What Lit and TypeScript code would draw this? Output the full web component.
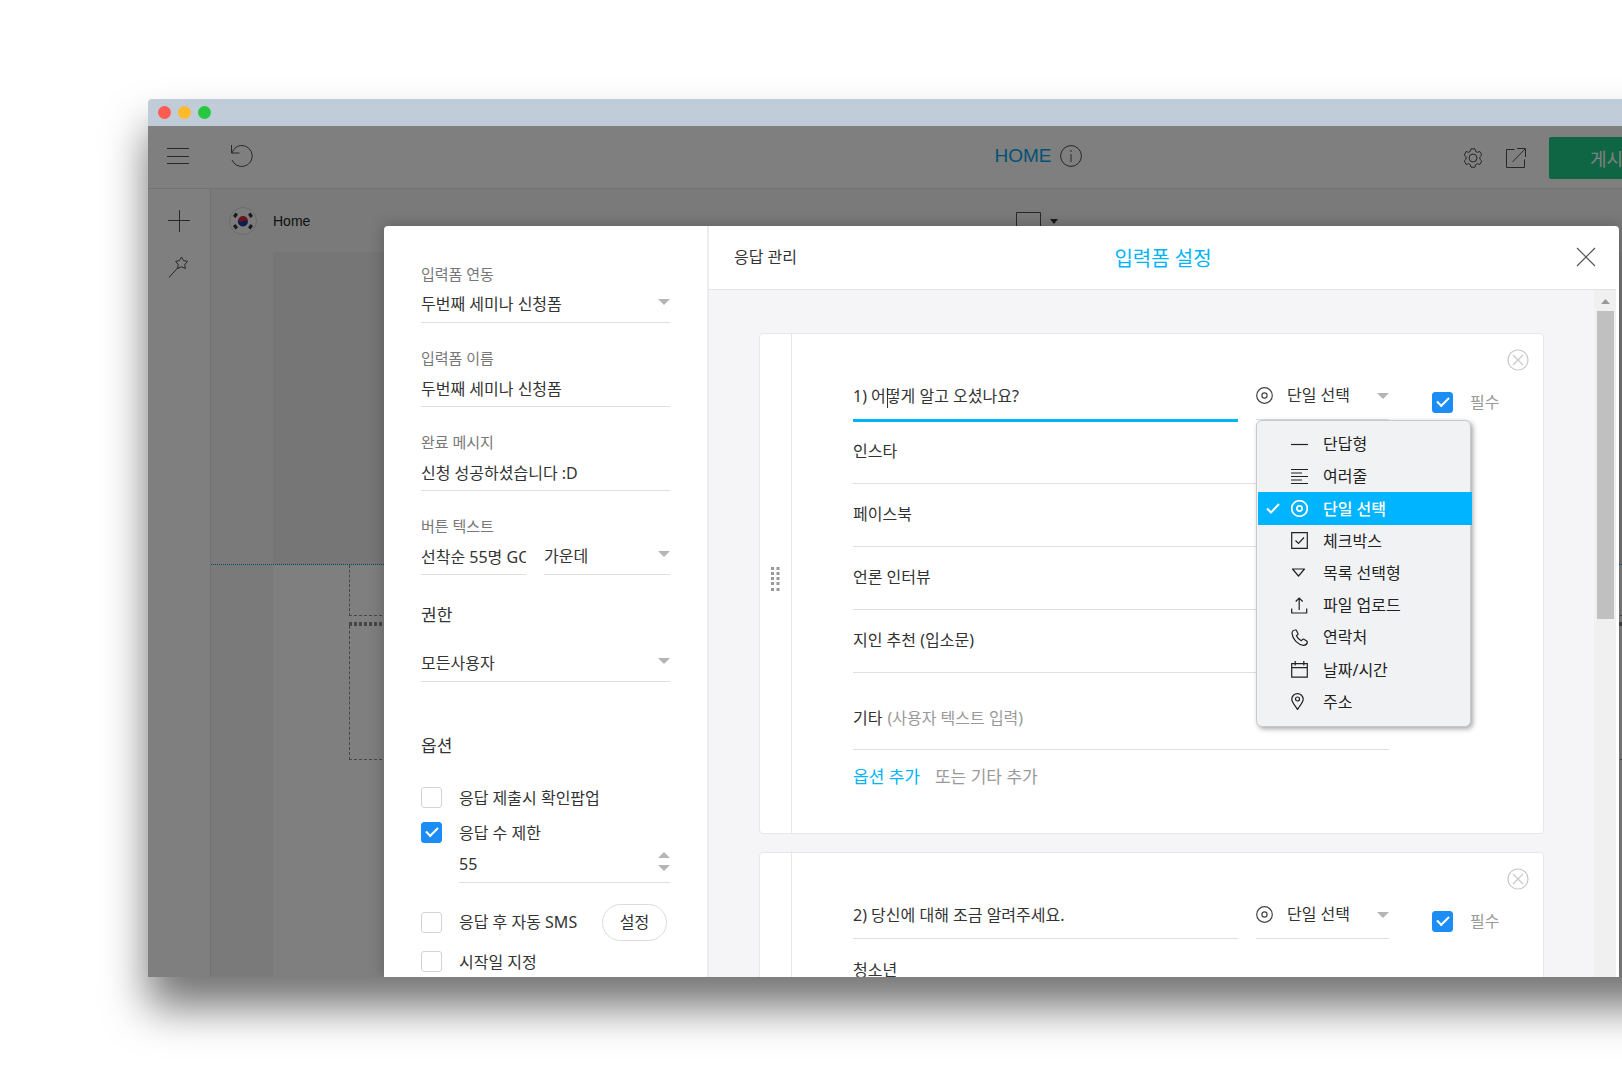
import { LitElement, html, css, svg, nothing } from "lit";
import { customElement, property, state } from "lit/decorators.js";
import { classMap } from "lit/directives/class-map.js";

const shared = css`
  *, *::before, *::after { box-sizing: border-box; }
  button, input, select {
    font: inherit;
    color: inherit;
    background: none;
    border: 0;
    border-radius: 0;
    margin: 0;
    padding: 0;
    outline: none;
  }
  button { cursor: pointer; }
  svg { display: block; fill: none; stroke: currentColor; flex: none; }
  .control {
    width: 100%;
    min-width: 0;
    height: 38px;
    border-bottom: 1px solid #dedfe1;
    appearance: none;
  }
  .picker { display: grid; align-items: center; min-width: 0; }
  .picker > * { grid-area: 1 / 1; }
  .caret { justify-self: end; pointer-events: none; color: #b5b5b5; fill: currentColor; stroke: none; }
  .check {
    appearance: none;
    display: grid;
    flex: none;
    width: 21px;
    height: 21px;
    border: 1px solid #cfd5da;
    border-radius: 3px;
    background: #fff;
  }
  .check:checked { background: #1c8df5; border-color: #1c8df5; }
  .check:checked::before {
    content: "";
    width: 12px;
    height: 7px;
    margin: 4px 0 0 4px;
    border: solid #fff;
    border-width: 0 0 2px 2px;
    transform: rotate(-45deg);
  }
`;

const caret = html`<svg class="caret" width="12" height="6" viewBox="0 0 12 6" aria-hidden="true"><path d="M0 0h12L6 6z" /></svg>`;

const icons: Record<string, unknown> = {
  short: svg`<path d="M0 8.500h17" />`,
  lines: svg`<path d="M0 1.500h17M0 5h11M0 8.500h17M0 12h11M0 15.500h17" />`,
  radio: svg`<circle cx="8.500" cy="8.500" r="7.800" /><circle cx="8.500" cy="8.500" r="2.600" />`,
  checkbox: svg`<path d="M.7.7h15.600v15.600H.7zM4.500 8.500l3 3 5.500-6" />`,
  dropdown: svg`<path d="M1.500 5h12L7.500 12z" stroke-linejoin="round" />`,
  upload: svg`<path d="M.7 11.500v4.500h15v-4.500M8.200 13V1M4.700 4.500L8.200 1l3.500 3.500" />`,
  phone: svg`<path d="M4.200 1C2.500 1.200 1 2.600 1 4.400c.6 6 5.800 11.200 11.500 11.900 2 0 3.400-1.200 3.800-2.800.1-.7-.1-1.100-.6-1.500l-2.800-1.700c-.6-.3-1.200-.2-1.600.3l-1 1.100c-2-.9-4-2.900-4.900-4.900l1.100-1c.5-.4.6-1 .3-1.600L5.500 1.500C5.200 1.100 4.800.9 4.200 1z" />`,
  date: svg`<path d="M.7 2.700h15.600v13.500H.7zM.7 6.700h15.600M4.200 0v4.500M12.800 0v4.500" />`,
  place: svg`<path d="M6.500 16.500C4.500 12.500.8 9.700.8 6.300a5.700 5.700 0 0 1 11.400 0c0 3.400-3.700 6.200-5.700 10.200z" /><circle cx="6.500" cy="6" r="2" />`,
};

const icon = (name: string, width = 1.2) =>
  html`<svg width="17" height="17" viewBox="0 0 17 17" stroke-width=${width} aria-hidden="true">${icons[name]}</svg>`;

const answerTypes = [
  ["short", "단답형"],
  ["lines", "여러줄"],
  ["radio", "단일 선택"],
  ["checkbox", "체크박스"],
  ["dropdown", "목록 선택형"],
  ["upload", "파일 업로드"],
  ["phone", "연락처"],
  ["date", "날짜/시간"],
  ["place", "주소"],
];

@customElement("question-card")
class QuestionCard extends LitElement {
  @property() question = "";
  @property({ attribute: false }) options: string[] = [];
  @property({ type: Boolean }) active = false;
  @state() private answerType = "radio";

  static styles = [
    shared,
    css`
      :host { display: block; }
      .card {
        display: grid;
        grid-template-columns: 32px minmax(0, 1fr);
        background: #fff;
        border: 1px solid #e6e7e9;
        border-radius: 4px;
      }
      .grip {
        display: grid;
        place-items: center;
        border-right: 1px solid #e6e7e9;
        padding-bottom: 9px;
        cursor: grab;
      }
      .grip svg { fill: #999; stroke: none; }
      .content { padding: 15px 14px 43px 61px; }
      .head { display: flex; justify-content: flex-end; height: 22px; color: #c9c9c9; }
      .ask {
        display: grid;
        grid-template-columns: minmax(0, 1fr) 133px 140px;
        align-items: start;
        height: 50px;
      }
      .title { position: relative; margin-right: 18px; }
      .title .control { height: 49px; }
      .title .focused { height: 51px; border-bottom: 3px solid #00b4fa; }
      .cursor { position: absolute; left: 34px; top: 17px; width: 1px; height: 20px; background: #333; }
      .type { position: relative; }
      .type .control { height: 49px; padding-left: 31px; }
      .type > .mark { pointer-events: none; color: #444; }
      .required {
        display: flex;
        align-items: center;
        gap: 17px;
        padding: 19px 0 0 43px;
        color: #999;
      }
      .options { padding-right: 140px; }
      .options .control { display: block; height: 63px; padding-bottom: 5px; }
      .etc {
        display: flex;
        align-items: center;
        gap: 5px;
        height: 77px;
        padding-top: 13px;
        border-bottom: 1px solid #dedfe1;
      }
      .etc input { flex: 1; min-width: 0; }
      .etc input::placeholder { color: #999; opacity: 1; }
      .add { display: flex; gap: 15px; margin-top: 14px; font-size: 17px; line-height: 26px; color: #999; }
      .add .primary { color: #00b4fa; }
      .menu {
        position: absolute;
        z-index: 2;
        top: 49px;
        left: 0;
        width: 215px;
        height: 307px;
        display: grid;
        grid-auto-rows: 1fr;
        padding: 7px 0 8px;
        background: #f1f2f4;
        border: 1px solid #c8c9cb;
        border-radius: 6px;
        box-shadow: 2px 2px 5px rgba(0, 0, 0, 0.35);
        color: #222;
      }
      .item {
        display: grid;
        grid-template-columns: 34px 32px 1fr;
        align-items: center;
        text-align: left;
      }
      .tick { margin-left: 8px; }
      .item.selected {
        margin: 0 -2px 0 1px;
        grid-template-columns: 33px 32px 1fr;
        background: #00b4ff;
        color: #fff;
        font-weight: 500;
      }
    `,
  ];

  private renderMenu() {
    return html`<div class="menu" role="listbox" aria-label="응답 유형">
      ${answerTypes.map(([name, label]) => {
        const selected = name === this.answerType;
        return html`<button
          class=${classMap({ item: true, selected })}
          role="option"
          aria-selected=${selected}
          @click=${() => (this.answerType = name)}
        >
          ${selected
            ? html`<svg class="tick" width="14" height="11" viewBox="0 0 14 11" stroke-width="2" aria-hidden="true"><path d="M1 5.500l4 4L13 1" /></svg>`
            : html`<span></span>`}
          ${icon(name, selected ? 1.7 : 1.2)}
          <span>${label}</span>
        </button>`;
      })}
    </div>`;
  }

  render() {
    return html`<article class="card">
      <div class="grip">
        <svg width="9" height="24" viewBox="0 0 9 24" aria-hidden="true">
          ${[0, 5, 10, 15, 21].map((y) => svg`<path d="M0 ${y}h3v3h-3zM5.500 ${y}h3v3h-3z" />`)}
        </svg>
      </div>
      <div class="content">
        <div class="head">
          <button aria-label="질문 삭제">
            <svg width="22" height="22" viewBox="0 0 22 22" stroke-width="1.200"><circle cx="11" cy="11" r="10" /><path d="M6 6l10 10M16 6L6 16" /></svg>
          </button>
        </div>
        <div class="ask">
          <div class="title">
            <input class=${classMap({ control: true, focused: this.active })} aria-label="질문" .value=${this.question} />
            ${this.active ? html`<span class="cursor"></span>` : nothing}
          </div>
          <div class="type picker">
            <select class="control" aria-label="응답 유형">
              <option>단일 선택</option>
            </select>
            <span class="mark">${icon("radio")}</span>
            ${caret}
            ${this.active ? this.renderMenu() : nothing}
          </div>
          <label class="required"><input class="check" type="checkbox" checked />필수</label>
        </div>
        <div class="options">
          ${this.options.map((o, i) => html`<input class="control" aria-label="옵션 ${i + 1}" .value=${o} />`)}
          <label class="etc">기타<input placeholder="(사용자 텍스트 입력)" /></label>
        </div>
        <div class="add"><button class="primary">옵션 추가</button><button>또는 기타 추가</button></div>
      </div>
    </article>`;
  }
}

@customElement("form-settings")
class FormSettings extends LitElement {
  static styles = [
    shared,
    css`
      :host { display: block; min-width: 0; overflow: hidden; }
      .panel { padding: 37px 37px 0; }
      .fields { display: grid; gap: 24px; }
      .field { display: grid; grid-template-rows: 22px 38px; }
      .picker > .caret { margin-bottom: 4px; }
      .caption { font-size: 15px; line-height: 22px; color: #777; }
      .pair { display: grid; grid-template-columns: 105px minmax(0, 1fr); gap: 18px; }
      .heading { font-size: 17px; font-weight: 400; line-height: 24px; margin: 28px 0 17px; }
      .heading.options { margin: 52px 0 22px; }
      .row { display: flex; align-items: center; height: 35px; }
      .row label { display: flex; align-items: center; gap: 17px; }
      .limit { margin-left: 38px; }
      .limit .control { height: 33px; padding-bottom: 5px; }
      .stepper { justify-self: end; display: grid; gap: 7px; padding-bottom: 10px; }
      .up { transform: rotate(180deg); }
      .sms { justify-content: space-between; height: 38px; margin: 20px 3px 3px 0; }
      .setup { width: 65px; height: 37px; border: 1px solid #dcdcdc; border-radius: 19px; }
    `,
  ];

  render() {
    return html`<div class="panel">
      <div class="fields">
        <div class="field">
          <label class="caption" for="link">입력폼 연동</label>
          <div class="picker"><select class="control" id="link"><option>두번째 세미나 신청폼</option></select>${caret}</div>
        </div>
        <div class="field">
          <label class="caption" for="name">입력폼 이름</label>
          <input class="control" id="name" value="두번째 세미나 신청폼" />
        </div>
        <div class="field">
          <label class="caption" for="message">완료 메시지</label>
          <input class="control" id="message" value="신청 성공하셨습니다 :D" />
        </div>
        <div class="field">
          <label class="caption" for="text">버튼 텍스트</label>
          <div class="pair">
            <input class="control" id="text" value="선착순 55명 GO" />
            <div class="picker"><select class="control" aria-label="버튼 정렬"><option>가운데</option></select>${caret}</div>
          </div>
        </div>
      </div>
      <h3 class="heading">권한</h3>
      <div class="picker"><select class="control" aria-label="권한"><option>모든사용자</option></select>${caret}</div>
      <h3 class="heading options">옵션</h3>
      <div class="row"><label><input class="check" type="checkbox" />응답 제출시 확인팝업</label></div>
      <div class="row"><label><input class="check" type="checkbox" checked />응답 수 제한</label></div>
      <div class="limit picker">
        <input class="control" inputmode="numeric" aria-label="응답 수" value="55" />
        <div class="stepper">
          <button aria-label="증가"><svg class="caret up" width="12" height="6" viewBox="0 0 12 6"><path d="M0 0h12L6 6z" /></svg></button>
          <button aria-label="감소">${caret}</button>
        </div>
      </div>
      <div class="row sms">
        <label><input class="check" type="checkbox" />응답 후 자동 SMS</label>
        <button class="setup">설정</button>
      </div>
      <div class="row"><label><input class="check" type="checkbox" />시작일 지정</label></div>
    </div>`;
  }
}

@customElement("site-editor")
class SiteEditor extends LitElement {
  static styles = [
    shared,
    css`
      :host {
        display: grid;
        grid-template-rows: 63px minmax(0, 1fr);
        min-height: 0;
        background: #fff;
        color: #222;
        font-family: "Liberation Sans", Arial, "Noto Sans CJK KR", sans-serif;
      }
      .bar {
        display: grid;
        grid-template-columns: 1fr auto 1fr;
        align-items: center;
        padding-bottom: 3px;
        border-bottom: 1px solid #e4e4e4;
      }
      .tools { display: flex; align-items: center; gap: 41px; padding: 1px 0 0 19px; color: #505050; }
      .page { display: flex; align-items: center; gap: 8px; padding-top: 1px; font-size: 19px; color: #00a4e8; }
      .page svg { color: #505050; }
      .actions {
        display: flex;
        align-items: center;
        justify-content: flex-end;
        gap: 23px;
        padding: 5px 231px 0 0;
        color: #505050;
      }
      .publish {
        width: 148px;
        height: 42px;
        border-radius: 2px;
        background: #1ecd8a;
        color: #fff;
        font: 18px "Noto Sans CJK KR", sans-serif;
      }
      .main { display: grid; grid-template-columns: 63px minmax(0, 1fr); min-height: 0; }
      .side {
        display: flex;
        flex-direction: column;
        align-items: center;
        gap: 24px;
        padding: 21px 1px 0 0;
        border-right: 1px solid #e2e2e2;
        color: #505050;
      }
      .work { display: grid; grid-template-rows: 63px 313px minmax(0, 1fr); background: #f5f5f5; }
      .crumbs { display: grid; grid-template-columns: 1fr auto 1fr; align-items: center; font-size: 14px; }
      .lang { display: flex; align-items: center; gap: 16px; padding-left: 18px; }
      .flag { stroke: none; }
      .device { display: flex; align-items: center; gap: 9px; margin-right: 66px; padding-top: 2px; color: #505050; }
      .section { padding-left: 62px; border-bottom: 1px dotted #008fd0; }
      .hero { height: 100%; background: #ececec; }
      .blank { padding-left: 62px; }
      .sheet { height: 100%; padding-left: 76px; background: #fff; }
      .block { height: 51px; border: 1px dashed #8c8c8c; border-width: 0 0 1px 1px; }
      .block.tall { height: 134px; }
      .space { height: 6px; }
      .seam { height: 4px; background: repeating-linear-gradient(90deg, #8c8c8c 0 3px, transparent 3px 5px); }
    `,
  ];

  render() {
    return html`
      <header class="bar">
        <div class="tools">
          <button aria-label="메뉴"><svg width="22" height="22" viewBox="0 0 22 22"><path d="M0 3.500h22M0 11.500h22M0 18.500h22" /></svg></button>
          <button aria-label="실행 취소"><svg width="24" height="24" viewBox="0 0 24 24"><path d="M1.500 1v8h8M2 9C4 3.500 8 1.500 12 1.500a10.500 10.500 0 1 1-10 14.500" /></svg></button>
        </div>
        <div class="page">
          <span>HOME</span>
          <svg width="22" height="22" viewBox="0 0 22 22"><circle cx="11" cy="11" r="10.400" /><path d="M11 9v8M11 5v2" /></svg>
        </div>
        <div class="actions">
          <button aria-label="설정">
            <svg width="20" height="20" viewBox="0 0 20 20"><circle cx="10" cy="10" r="4" /><path d="M8 .8h4l.6 2.500 1.700 1 2.500-.8 2 3.500-1.900 1.800v2.400l1.900 1.800-2 3.500-2.500-.8-1.700 1-.6 2.500H8l-.6-2.500-1.700-1-2.500.8-2-3.500 1.900-1.800V8.800L1.200 7l2-3.500 2.500.8 1.700-1z" stroke-linejoin="round" /></svg>
          </button>
          <button aria-label="미리보기"><svg width="20" height="20" viewBox="0 0 20 20"><path d="M8.500 1.500H.500v18h18V11.500M11 .5h8.500v8.500M19 1L6.500 14" /></svg></button>
          <button class="publish">게시하기</button>
        </div>
      </header>
      <div class="main">
        <nav class="side">
          <button aria-label="추가"><svg width="22" height="22" viewBox="0 0 22 22"><path d="M0 10.500h22M11.500 0v22" /></svg></button>
          <button aria-label="디자인"><svg width="21" height="22" viewBox="0 0 21 22" stroke-linejoin="round"><path d="M1 21.500L10 11.500M13.500 1l2 3.600 4.100.8-2.800 3 .5 4.100-3.800-1.700-3.800 1.700.5-4.100-2.700-3 4-.8z" /></svg></button>
        </nav>
        <div class="work">
          <div class="crumbs">
            <div class="lang">
              <svg class="flag" width="28" height="28" viewBox="0 0 28 28" aria-hidden="true">
                <circle cx="14" cy="14" r="13.500" fill="#f8f8f8" stroke="#d6d6d6" />
                <circle cx="14" cy="14" r="5" fill="#d8262e" />
                <path d="M9.300 12.500A5 5 0 1 0 18.800 15.500C18.500 13.200 15.500 12.700 14 14C12.500 15.500 9.500 15 9.300 12.500z" fill="#173f9e" />
                <g fill="#333">
                  <path d="M4 9l2.500-3.500L9 7.500l-2.500 3.500zM19 7.500l2.500-2L24 9l-2.500 2zM4 19l2.500-2L9 20.500l-2.500 2zM19 20.500l2.500-3.500L24 19l-2.500 3.500z" />
                </g>
              </svg>
              <span>Home</span>
            </div>
            <div class="device">
              <svg width="25" height="20" viewBox="0 0 25 20"><path d="M.5.500h24v19H.500zM.5 14.500h24" /></svg>
              <svg width="8" height="5" viewBox="0 0 8 5"><path d="M0 0h8L4 5z" fill="#333" stroke="none" /></svg>
            </div>
          </div>
          <div class="section"><div class="hero"></div></div>
          <div class="blank">
            <div class="sheet">
              <div class="block"></div>
              <div class="space"></div>
              <div class="seam"></div>
              <div class="block tall"></div>
            </div>
          </div>
        </div>
      </div>
    `;
  }
}

@customElement("app-root")
class AppRoot extends LitElement {
  static styles = [
    shared,
    css`
      :host {
        display: block;
        box-sizing: border-box;
        height: 100vh;
        padding: 99px 0 99px 148px;
        overflow: hidden;
        background: #fff;
        color: #333;
        font: 16px/24px "Noto Sans", "Noto Sans CJK KR", sans-serif;
      }
      .window {
        display: grid;
        grid-template-rows: 27px minmax(0, 1fr);
        height: 100%;
        margin-right: -306px;
        border-radius: 4px 4px 0 0;
        box-shadow: 0 30px 44px rgba(0, 0, 0, 0.55);
      }
      .titlebar {
        display: flex;
        align-items: center;
        gap: 7px;
        padding-left: 10px;
        background: #c0cdd9;
        border-radius: 4px 4px 0 0;
      }
      .light { width: 13px; height: 13px; border-radius: 50%; }
      .red { background: #ff5b52; }
      .amber { background: #ffbb2c; }
      .green { background: #25c83e; }
      .stage { position: relative; display: grid; min-height: 0; overflow: hidden; }
      .backdrop {
        position: absolute;
        inset: 0;
        padding: 100px 309px 0 236px;
        background: rgba(0, 0, 0, 0.5);
      }
      .modal {
        display: grid;
        grid-template-columns: 323px minmax(0, 1fr);
        height: 100%;
        background: #fff;
        border-radius: 4px 4px 0 0;
        box-shadow: 0 0 16px rgba(0, 0, 0, 0.25);
      }
      .editor {
        display: grid;
        grid-template-rows: 64px minmax(0, 1fr);
        min-height: 0;
        padding-right: 3px;
        border-left: 2px solid #ececee;
      }
      .tabs {
        display: grid;
        grid-template-columns: 1fr auto 1fr;
        align-items: center;
        padding: 0 20px 2px 25px;
        border-bottom: 1px solid #e2e3e5;
      }
      .tabs > :first-child { justify-self: start; }
      .tabs > :last-child { justify-self: end; color: #555; }
      .current { font-size: 20px; line-height: 28px; font-weight: 400; margin: 0 4px 0 0; padding-top: 5px; color: #00b4fa; }
      .scroll { display: grid; grid-template-columns: minmax(0, 1fr) 22px; min-height: 0; background: #f5f5f8; }
      .questions { display: flex; flex-direction: column; gap: 18px; padding: 43px 50px 0; overflow: hidden; }
      .track { background: #f0f0f0; display: flex; flex-direction: column; align-items: center; padding-top: 9px; gap: 7px; }
      .track svg { fill: #999; stroke: none; }
      .thumb { width: 17px; height: 308px; background: #c0c0c0; }
    `,
  ];

  render() {
    return html`<div class="window">
      <div class="titlebar">
        <span class="light red"></span><span class="light amber"></span><span class="light green"></span>
      </div>
      <div class="stage">
        <site-editor></site-editor>
        <div class="backdrop">
          <section class="modal" role="dialog" aria-label="입력폼 설정">
            <form-settings></form-settings>
            <div class="editor">
              <header class="tabs">
                <button>응답 관리</button>
                <h2 class="current">입력폼 설정</h2>
                <button aria-label="닫기"><svg width="20" height="20" viewBox="0 0 20 20" stroke-width="1.200"><path d="M1 1l18 18M19 1L1 19" /></svg></button>
              </header>
              <div class="scroll">
                <div class="questions">
                  <question-card
                    active
                    question="1) 어떻게 알고 오셨나요?"
                    .options=${["인스타", "페이스북", "언론 인터뷰", "지인 추천 (입소문)"]}
                  ></question-card>
                  <question-card question="2) 당신에 대해 조금 알려주세요." .options=${["청소년"]}></question-card>
                </div>
                <div class="track">
                  <svg width="9" height="5" viewBox="0 0 9 5" aria-hidden="true"><path d="M0 5L4.500 0 9 5z" /></svg>
                  <div class="thumb"></div>
                </div>
              </div>
            </div>
          </section>
        </div>
      </div>
    </div>`;
  }
}
